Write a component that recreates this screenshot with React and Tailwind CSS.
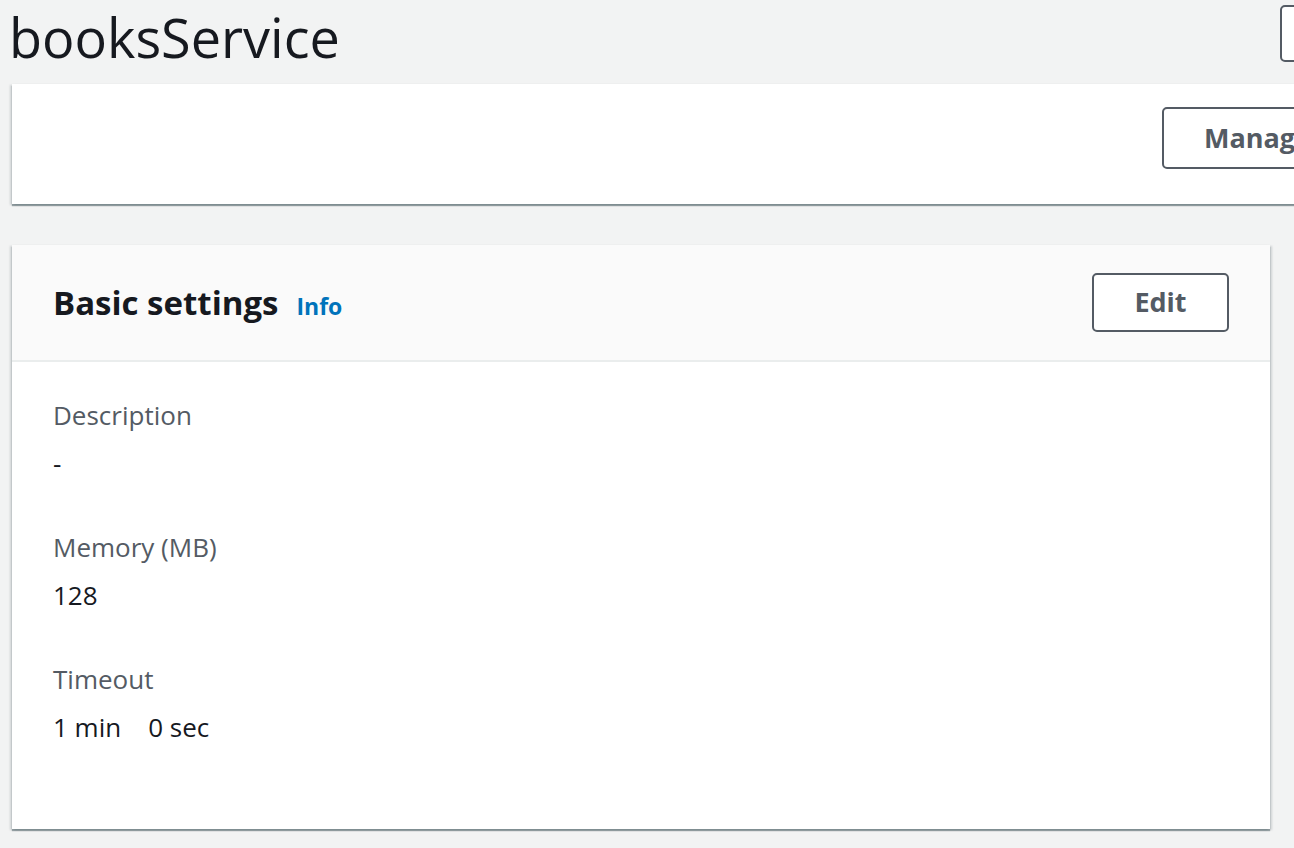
import React from 'react';

const font = { fontFamily: '"Open Sans", "Noto Sans", Arial, sans-serif' };

const settings = [
  { label: 'Description', value: '-' },
  { label: 'Memory (MB)', value: '128' },
  { label: 'Timeout', value: '1 min\u00a0\u00a0\u00a0 0 sec' }
];

const cardShadow =
  'shadow-[0_2px_1px_0_rgba(0,28,36,0.35),2px_1px_2px_0_rgba(0,28,36,0.15),-2px_1px_2px_0_rgba(0,28,36,0.15)]';

export default function App() {
  return (
    <div className="h-[848px] w-[1294px] overflow-hidden bg-[#f2f3f3]" style={font}>
      <div className="w-[1360px]">
        {/* page header */}
        <div className="flex h-[84px] items-start justify-between">
          <h1 className="pl-[9px] text-[54px] leading-[74px] text-[#16191f]">booksService</h1>
          <button className="mt-[5px] h-[57px] w-[80px] rounded-[5px] border-2 border-[#545b64] bg-white" />
        </div>

        {/* actions card */}
        <div className={`ml-[12px] flex h-[120px] items-start bg-white pl-[1150px] pt-[23px] ${cardShadow}`}>
          <button className="h-[62px] whitespace-nowrap rounded-[5px] border-2 border-[#545b64] bg-white px-[40px] text-[27px] font-bold text-[#545b64]">
            Manage tags
          </button>
        </div>
      </div>

      {/* basic settings */}
      <div className={`ml-[12px] mt-[41px] h-[584px] w-[1258px] bg-white ${cardShadow}`}>
        <div className="flex h-[117px] items-center justify-between border-b-2 border-[#eaeded] bg-[#fafafa] px-[41px]">
          <div className="flex items-baseline gap-[18px]">
            <h2 className="text-[33px] font-bold text-[#16191f]">Basic settings</h2>
            <a className="text-[23px] font-bold text-[#0073bb]">Info</a>
          </div>
          <button className="h-[59px] w-[137px] rounded-[5px] border-2 border-[#545b64] bg-white text-[27px] font-bold text-[#545b64]">
            Edit
          </button>
        </div>

        <div className="flex flex-col gap-[44px] px-[41px] pt-[33px]">
          {settings.map(({ label, value }) => (
            <div key={label}>
              <div className="mb-[8px] text-[26px] leading-[40px] text-[#545b64]">{label}</div>
              <div className="text-[26px] leading-[40px] text-[#16191f]">{value}</div>
            </div>
          ))}
        </div>
      </div>
    </div>
  );
}
